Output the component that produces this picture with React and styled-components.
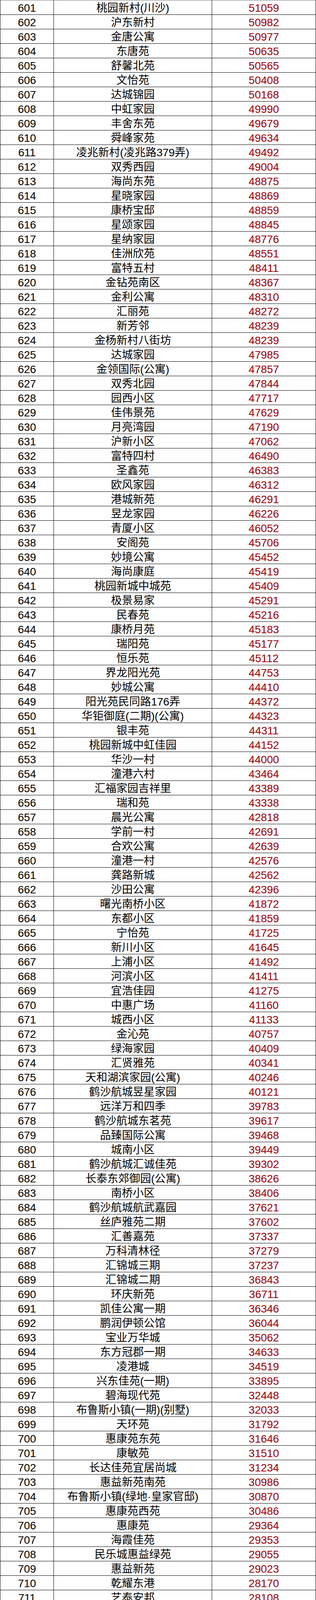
import styled, { createGlobalStyle } from "styled-components";

const GlobalStyle = createGlobalStyle`
  html, body {
    margin: 0;
    padding: 0;
    background: #fff;
  }
  body {
    font-family: "Liberation Sans", "Noto Sans CJK SC", sans-serif;
  }
`;

const rows = `601|桃园新村(川沙)|51059
602|沪东新村|50982
603|金唐公寓|50977
604|东唐苑|50635
605|舒馨北苑|50565
606|文怡苑|50408
607|达城锦园|50168
608|中虹家园|49990
609|丰舍东苑|49679
610|舜峰家苑|49634
611|凌兆新村(凌兆路379弄)|49492
612|双秀西园|49004
613|海尚东苑|48875
614|星晓家园|48869
615|康桥宝邸|48859
616|星颂家园|48845
617|星纳家园|48776
618|佳洲欣苑|48551
619|富特五村|48411
620|金钻苑南区|48367
621|金利公寓|48310
622|汇丽苑|48272
623|新芳邻|48239
624|金杨新村八街坊|48239
625|达城家园|47985
626|金领国际(公寓)|47857
627|双秀北园|47844
628|园西小区|47717
629|佳伟景苑|47629
630|月亮湾园|47190
631|沪新小区|47062
632|富特四村|46490
633|圣鑫苑|46383
634|欧风家园|46312
635|港城新苑|46291
636|昱龙家园|46226
637|青厦小区|46052
638|安阁苑|45706
639|妙境公寓|45452
640|海尚康庭|45419
641|桃园新城中城苑|45409
642|极景易家|45291
643|民春苑|45216
644|康桥月苑|45183
645|瑞阳苑|45177
646|恒乐苑|45112
647|界龙阳光苑|44753
648|妙城公寓|44410
649|阳光苑民同路176弄|44372
650|华钜御庭(二期)(公寓)|44323
651|银丰苑|44311
652|桃园新城中虹佳园|44152
653|华沙一村|44000
654|潼港六村|43464
655|汇福家园吉祥里|43389
656|瑞和苑|43338
657|晨光公寓|42818
658|学前一村|42691
659|合欢公寓|42639
660|潼港一村|42576
661|龚路新城|42562
662|沙田公寓|42396
663|曙光南桥小区|41872
664|东都小区|41859
665|宁怡苑|41725
666|新川小区|41645
667|上浦小区|41492
668|河滨小区|41411
669|宜浩佳园|41275
670|中惠广场|41160
671|城西小区|41133
672|金沁苑|40757
673|绿海家园|40409
674|汇贤雅苑|40341
675|天和湖滨家园(公寓)|40246
676|鹤沙航城昱星家园|40121
677|远洋万和四季|39783
678|鹤沙航城东茗苑|39617
679|品臻国际公寓|39468
680|城南小区|39449
681|鹤沙航城汇诚佳苑|39302
682|长泰东郊御园(公寓)|38626
683|南桥小区|38406
684|鹤沙航城航武嘉园|37621
685|丝庐雅苑二期|37602
686|汇善嘉苑|37337
687|万科清林径|37279
688|汇锦城三期|37237
689|汇锦城二期|36843
690|环庆新苑|36711
691|凯佳公寓一期|36346
692|鹏润伊顿公馆|36044
693|宝业万华城|35062
694|东方冠郡一期|34633
695|凌港城|34519
696|兴东佳苑(一期)|33895
697|碧海现代苑|32448
698|布鲁斯小镇(一期)(别墅)|32033
699|天环苑|31792
700|惠康苑东苑|31646
701|康敏苑|31510
702|长达佳苑宜居尚城|31234
703|惠益新苑南苑|30986
704|布鲁斯小镇(绿地·皇家官邸)|30870
705|惠康苑西苑|30486
706|惠康苑|29364
707|海霞佳苑|29353
708|民乐城惠益绿苑|29055
709|惠益新苑|29023
710|乾耀东港|28170
711|艺泰安邦|28108
712|蓝色城邦(公寓)|27319
713|红光花苑|27286
714|荡湾新村|27036
715|博佳花园|26932
716|桃花源一村|26381
717|海燕二村|26338
718|德盈佳园|25054
719|书院一号公寓|23244
720|申云小区|22821
721|丽泽梅傲苑|22364
722|泥城苑|21935
723|新舒苑|21340
724|云锦新苑|19623
725|云帆雅苑|19065`
  .split("\n")
  .map((line) => line.split("|"));

const Sheet = styled.div`
  width: 809px;
  box-sizing: border-box;
  border-top: 1px solid #6f6f6f;
  border-left: 1px solid #000;
  background: #fff;
`;

const Row = styled.div`
  display: grid;
  grid-template-columns: 137px 405px 266px;
  height: 37px;
  box-sizing: border-box;
  border-bottom: 1px solid #000;
`;

const Cell = styled.div`
  box-sizing: border-box;
  height: 36px;
  padding-top: 4px;
  line-height: 32px;
  border-right: 1px solid #000;
  text-align: center;
  white-space: nowrap;
  overflow: hidden;
  font-size: 28px;
  color: ${(p) => (p.$price ? "#990000" : "#000")};
`;

const Footer = styled.div`
  height: 59px;
  box-sizing: border-box;
  border-right: 1px solid #000;
  border-bottom: 1px solid #000;
  padding-top: 9px;
  line-height: 40px;
  text-align: center;
  font-size: 28px;
  color: #333;
`;

export default function App() {
  return (
    <>
      <GlobalStyle />
      <Sheet>
        {rows.map(([rank, name, price]) => (
          <Row key={rank}>
            <Cell>{rank}</Cell>
            <Cell>{name}</Cell>
            <Cell $price>{price}</Cell>
          </Row>
        ))}
        <Footer>统计日期 2021年5月13日</Footer>
      </Sheet>
    </>
  );
}
